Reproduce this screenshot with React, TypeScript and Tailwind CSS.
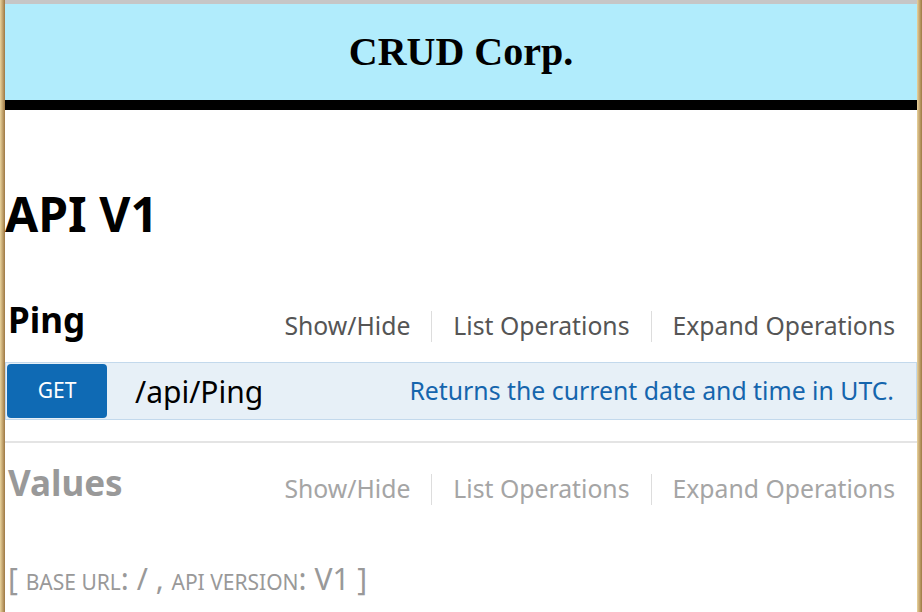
import React from "react";

const sans = "font-['Noto_Sans','Open_Sans',sans-serif]";

function SectionHeader({ title, muted }: { title: string; muted?: boolean }) {
  const linkColor = muted ? "text-[#a5a5a5]" : "text-[#555]";
  const items = ["Show/Hide", "List Operations", "Expand Operations"];
  return (
    <div className="flex items-start justify-between pl-[3px] pr-[22px]">
      <h2 className={`text-[35px] leading-[40px] font-bold ${muted ? "text-[#999]" : "text-black"}`}>
        {title}
      </h2>
      <ul className={`mt-[10px] flex items-center text-[24.75px] leading-[32px] ${linkColor}`}>
        {items.map((label, i) => (
          <li key={label} className="flex items-center">
            {i > 0 && <span className="mx-[21px] h-[31px] w-px bg-[#ddd]" />}
            <a href="#">{label}</a>
          </li>
        ))}
      </ul>
    </div>
  );
}

export default function App() {
  return (
    <div className={`flex h-[612px] w-[922px] overflow-hidden bg-white ${sans}`}>
      <div className="w-[5px] shrink-0 bg-gradient-to-r from-[#e9d39c] to-[#9d7843]" />
      <div className="flex min-w-0 flex-1 flex-col">
        <div className="h-[4px] bg-[#c6c6c6]" />
        <header className="flex h-[96px] items-center justify-center bg-[#b1ecfc]">
          <h1 className="font-['Liberation_Serif',serif] text-[40px] font-bold text-black">CRUD Corp.</h1>
        </header>
        <div className="h-[10px] bg-black" />

        <main>
          <h1 className="mt-[76px] text-[48px] leading-[56px] font-bold text-black">API V1</h1>

          <section className="mt-[58px]">
            <SectionHeader title="Ping" />
            <div className="mt-[20px] flex items-center border border-[#c3d9ec] bg-[#e7f0f7] p-px">
              <span className="flex h-[54px] w-[100px] items-center justify-center rounded-[4px] bg-[#0f6ab4] text-[21px] text-white">
                GET
              </span>
              <span className="ml-[28px] text-[30px] text-black">/api/Ping</span>
              <span className="ml-auto pr-[21px] text-[24.8px] text-[#1565ad]">
                Returns the current date and time in UTC.
              </span>
            </div>
          </section>

          <div className="mt-[21px] h-[2px] bg-[#e4e4e4]" />

          <section className="mt-[20px]">
            <SectionHeader title="Values" muted />
          </section>

          <p className="mt-[56px] pl-[3px] text-[30px] leading-[36px] text-[#999]">
            [ <span className="text-[21px] uppercase">base url</span>: / ,{" "}
            <span className="text-[21px] uppercase">api version</span>: V1 ]
          </p>
        </main>
      </div>
      <div className="w-[5px] shrink-0 bg-gradient-to-r from-[#e9d39c] to-[#9d7843]" />
    </div>
  );
}
